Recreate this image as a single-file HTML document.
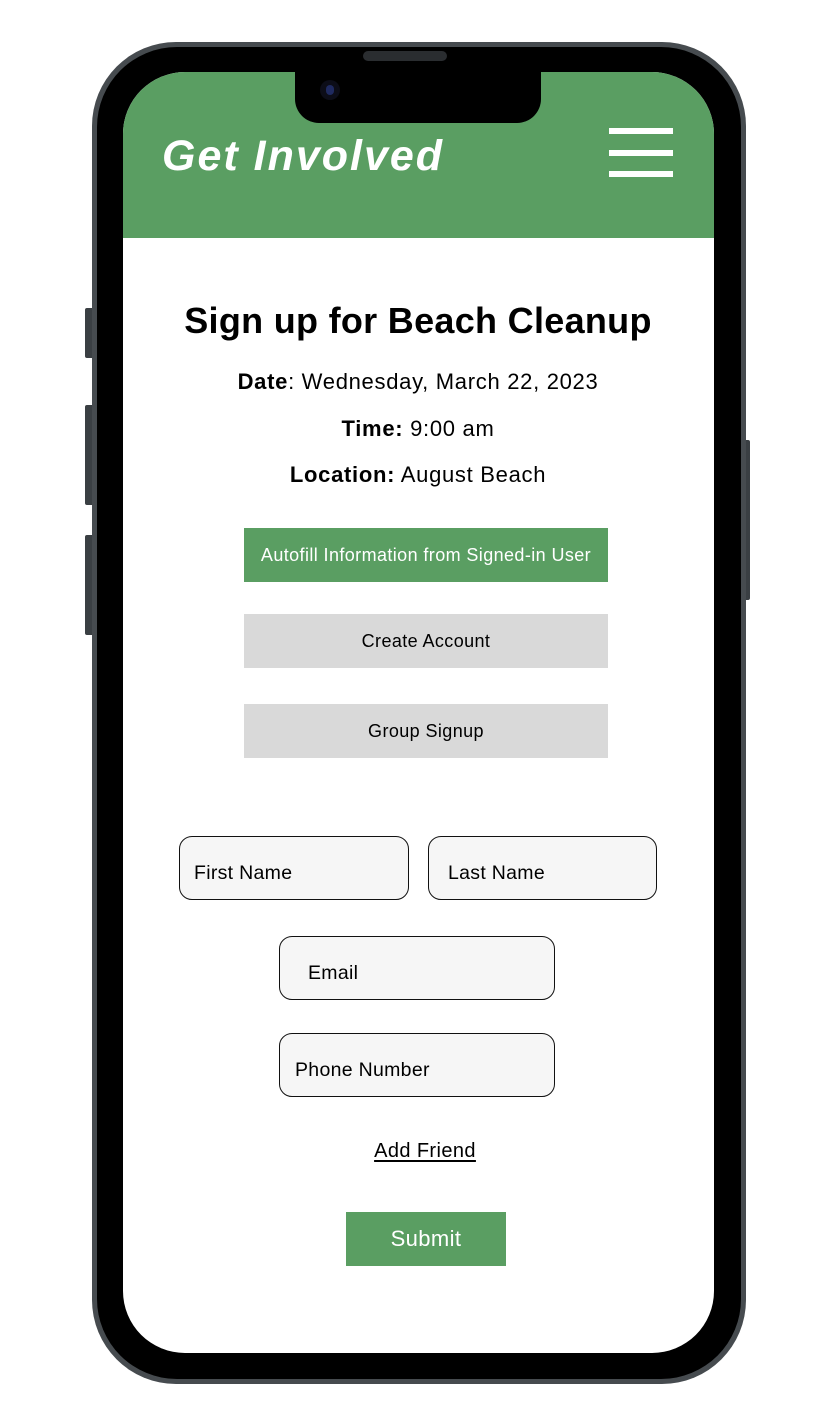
<!DOCTYPE html>
<html><head><meta charset="utf-8"><style>
*{margin:0;padding:0;box-sizing:border-box}
body{width:830px;height:1424px;background:#fff;position:relative;overflow:hidden;font-family:"Liberation Sans","DejaVu Sans",sans-serif;color:#000}
.a{position:absolute}
.btn{position:absolute;display:flex;align-items:center;justify-content:center;font-size:18px;letter-spacing:0.4px}
.in{position:absolute;background:#f6f6f6;border:1.5px solid #111;border-radius:13px;font-size:19.5px;display:flex;align-items:center;padding-top:10px;letter-spacing:0.3px}
.line{position:absolute;left:0;right:0;text-align:center;font-size:22px;letter-spacing:0.7px}
</style></head><body>
<div class="a" style="left:85px;top:308px;width:9px;height:50px;background:#3a3f43;border-radius:2px"></div>
<div class="a" style="left:85px;top:405px;width:9px;height:100px;background:#3a3f43;border-radius:2px"></div>
<div class="a" style="left:85px;top:535px;width:9px;height:100px;background:#3a3f43;border-radius:2px"></div>
<div class="a" style="left:742px;top:440px;width:8px;height:160px;background:#3a3f43;border-radius:2px"></div>
<div class="a" style="left:92px;top:42px;width:654px;height:1342px;border-radius:84px;background:#464b4f"></div>
<div class="a" style="left:97px;top:47px;width:644px;height:1332px;border-radius:80px;background:#000"></div>
<div class="a" style="left:123px;top:72px;width:591px;height:1281px;border-radius:62px;background:#fff;overflow:hidden">
  <div class="a" style="left:0;top:0;width:591px;height:166px;background:#5a9e62"></div>
</div>
<div class="a" style="left:295px;top:60px;width:246px;height:63px;background:#000;border-radius:0 0 24px 24px"></div>
<div class="a" style="left:363px;top:51px;width:84px;height:10px;background:#2a2d30;border-radius:5px"></div>
<div class="a" style="left:320px;top:80px;width:20px;height:20px;background:#0c0d18;border-radius:50%"></div>
<div class="a" style="left:326px;top:85px;width:8px;height:10px;background:#1f2a60;border-radius:4px"></div>
<div class="a" style="left:162px;top:132px;font-size:43px;font-weight:bold;font-style:italic;color:#fff;font-family:'Liberation Sans',sans-serif;letter-spacing:2px">Get Involved</div>
<div class="a" style="left:609px;top:128px;width:64px;height:6px;background:#fff"></div>
<div class="a" style="left:609px;top:150px;width:64px;height:6px;background:#fff"></div>
<div class="a" style="left:609px;top:171px;width:64px;height:6px;background:#fff"></div>
<div class="line" style="top:300px;font-size:36px;font-weight:bold;left:6px;letter-spacing:0.3px">Sign up for Beach Cleanup</div>
<div class="line" style="top:369px;left:6px"><b>Date</b>: Wednesday, March 22, 2023</div>
<div class="line" style="top:416px;left:6px"><b>Time:</b> 9:00 am</div>
<div class="line" style="top:462px;left:6px"><b>Location:</b> August Beach</div>
<div class="btn" style="left:244px;top:528px;width:364px;height:54px;background:#5a9e62;color:#fff">Autofill Information from Signed-in User</div>
<div class="btn" style="left:244px;top:614px;width:364px;height:54px;background:#d9d9d9">Create Account</div>
<div class="btn" style="left:244px;top:704px;width:364px;height:54px;background:#d9d9d9">Group Signup</div>
<div class="in" style="left:179px;top:836px;width:230px;height:64px;padding-left:14px">First Name</div>
<div class="in" style="left:428px;top:836px;width:229px;height:64px;padding-left:19px">Last Name</div>
<div class="in" style="left:279px;top:936px;width:276px;height:64px;padding-left:28px">Email</div>
<div class="in" style="left:279px;top:1033px;width:276px;height:64px;padding-left:15px">Phone Number</div>
<div class="line" style="top:1140px;font-size:20px;left:20px;letter-spacing:0.4px"><span style="text-decoration:underline;text-underline-offset:3px">Add Friend</span></div>
<div class="btn" style="left:346px;top:1212px;width:160px;height:54px;background:#5a9e62;color:#fff;font-size:22px">Submit</div>
</body></html>
